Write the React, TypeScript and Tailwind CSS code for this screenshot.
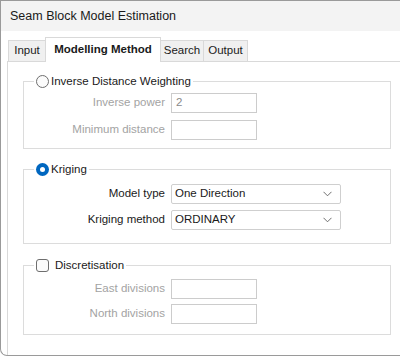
import { ReactNode } from "react"

const font = { fontFamily: '"Liberation Sans", Arial, sans-serif' }

function Radio({ checked }: { checked?: boolean }) {
    if (checked) {
        return (
            <span className="w-[13px] h-[13px] rounded-full bg-[#0067c0] flex items-center justify-center shrink-0">
                <span className="w-[5px] h-[5px] rounded-full bg-white" />
            </span>
        )
    }
    return <span className="w-[13px] h-[13px] rounded-full border border-[#6e6e6e] bg-[#fbfbfb] shrink-0" />
}

function Checkbox() {
    return <span className="w-[13px] h-[13px] rounded-[3px] border border-[#6e6e6e] bg-[#fbfbfb] shrink-0 mr-[4px]" />
}

function Group({ control, label, children, className }: { control: ReactNode; label: string; children: ReactNode; className?: string }) {
    return (
        <fieldset className={`border border-[#dcdcdc] w-[368px] pl-[10px] ${className ?? ""}`}>
            <legend className="px-[2px]">
                <span className="flex items-center gap-[2px] text-[11.5px] text-[#1a1a1a] leading-[14px]">
                    {control}
                    {label}
                </span>
            </legend>
            <div className="flex flex-col">{children}</div>
        </fieldset>
    )
}

function Row({ label, disabled, children }: { label: string; disabled?: boolean; children: ReactNode }) {
    return (
        <div className="flex items-center gap-[6px]">
            <span className={`w-[131px] text-right text-[11.5px] ${disabled ? "text-[#a3a3a3]" : "text-[#1a1a1a]"}`}>
                {label}
            </span>
            {children}
        </div>
    )
}

function TextBox({ value }: { value?: string }) {
    return (
        <div className="w-[86px] h-[20px] border border-[#cccccc] bg-white text-[11.5px] text-[#8a8a8a] px-[4px] flex items-center">
            {value}
        </div>
    )
}

function Select({ value }: { value: string }) {
    return (
        <div className="w-[170px] h-[20px] border border-[#cfcfcf] rounded-[2px] bg-white text-[11.5px] text-[#1a1a1a] pl-[3px] pr-[8px] flex items-center justify-between">
            <span>{value}</span>
            <svg width="9" height="6" viewBox="0 0 9 6" fill="none">
                <path d="M0.5 0.8 L4.5 4.8 L8.5 0.8" stroke="#5f5f5f" strokeWidth="0.9" />
            </svg>
        </div>
    )
}

const tabs = [
    { name: "Input", w: "w-[38px]" },
    { name: "Modelling Method", w: "w-[116px]" },
    { name: "Search", w: "w-[44px]" },
    { name: "Output", w: "w-[45px]" },
]

export default function App() {
    return (
        <div className="w-[400px] h-[356px] border-l border-b border-t border-[#9a9a9a] rounded-bl-[7px] bg-white overflow-hidden flex flex-col" style={font}>
            {/* Title bar */}
            <div className="h-[30px] bg-[#f3f3f3] flex items-center pl-[9px] text-[12.5px] text-[#1a1a1a] shrink-0">
                Seam Block Model Estimation
            </div>

            <div className="pl-[6px] pt-[5px] flex flex-col">
                {/* Tabs */}
                <div className="flex items-end h-[25px] pl-[1px]">
                    {tabs.map((t, i) => {
                        const active = t.name === "Modelling Method"
                        return (
                            <div
                                key={t.name}
                                className={
                                    active
                                        ? `${t.w} h-[25px] bg-white border border-b-0 border-[#d9d9d9] font-bold text-[11.5px] text-[#1a1a1a] flex items-center justify-center relative top-[1px] -ml-[1px]`
                                        : `${t.w} h-[21px] bg-[#f0f0f0] border border-b-0 border-[#d9d9d9] text-[11.5px] text-[#1a1a1a] flex items-center justify-center ${i === 0 ? "" : "-ml-[1px]"}`
                                }
                            >
                                {t.name}
                            </div>
                        )
                    })}
                </div>

                {/* Tab panel */}
                <div className="border-t border-l border-b border-[#d9d9d9] h-[298px] pl-[15px] pt-[12px] flex flex-col">
                    <Group control={<Radio />} label="Inverse Distance Weighting" className="pt-[5px] pb-[8px]">
                        <div className="flex flex-col gap-[7px]">
                            <Row label="Inverse power" disabled>
                                <TextBox value="2" />
                            </Row>
                            <Row label="Minimum distance" disabled>
                                <TextBox />
                            </Row>
                        </div>
                    </Group>

                    <Group control={<Radio checked />} label="Kriging" className="mt-[13px] pt-[8px] pb-[13px]">
                        <div className="flex flex-col gap-[6px]">
                            <Row label="Model type">
                                <Select value="One Direction" />
                            </Row>
                            <Row label="Kriging method">
                                <Select value="ORDINARY" />
                            </Row>
                        </div>
                    </Group>

                    <Group control={<Checkbox />} label="Discretisation" className="mt-[14px] pt-[7px] pb-[10px]">
                        <div className="flex flex-col gap-[5px]">
                            <Row label="East divisions" disabled>
                                <TextBox />
                            </Row>
                            <Row label="North divisions" disabled>
                                <TextBox />
                            </Row>
                        </div>
                    </Group>
                </div>
            </div>
        </div>
    )
}
